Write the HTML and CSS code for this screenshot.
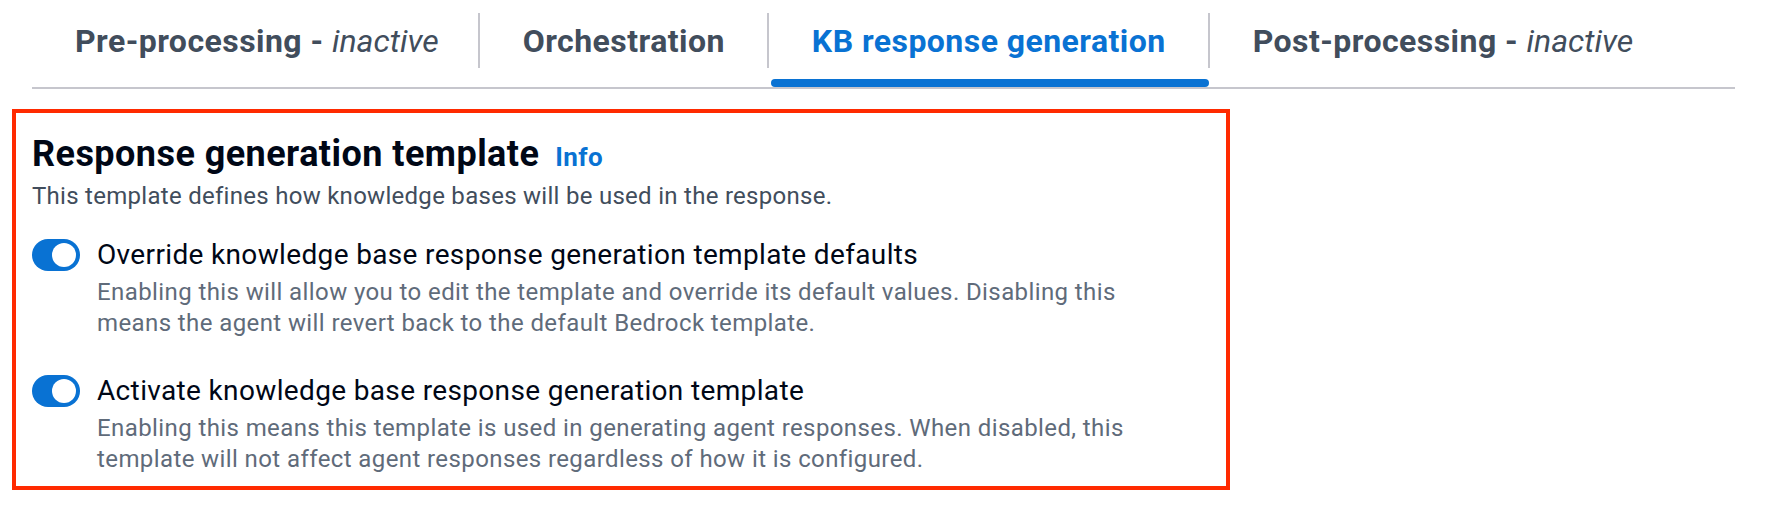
FILE: index.html
```html
<!DOCTYPE html>
<html lang="en">
<head>
<meta charset="utf-8">
<title>KB response generation</title>
<link rel="stylesheet" href="styles.css">
</head>
<body>
  <div class="tabs" role="tablist">
    <div class="tab"><span class="tab-label">Pre-processing - <em>inactive</em></span></div>
    <div class="tab"><span class="tab-label">Orchestration</span></div>
    <div class="tab tab-active"><span class="tab-label">KB response generation</span></div>
    <div class="tab tab-last"><span class="tab-label">Post-processing - <em>inactive</em></span></div>
  </div>

  <section class="panel">
    <div class="panel-header">
      <h2 class="panel-title">Response generation template</h2>
      <a class="info-link" href="#">Info</a>
    </div>
    <p class="panel-desc">This template defines how knowledge bases will be used in the response.</p>

    <div class="toggle-field">
      <div class="toggle-row">
        <span class="toggle"><span class="toggle-knob"></span></span>
        <span class="toggle-label">Override knowledge base response generation template defaults</span>
      </div>
      <p class="toggle-desc">Enabling this will allow you to edit the template and override its default values. Disabling this means the agent will revert back to the default Bedrock template.</p>
    </div>

    <div class="toggle-field toggle-field-second">
      <div class="toggle-row">
        <span class="toggle"><span class="toggle-knob"></span></span>
        <span class="toggle-label">Activate knowledge base response generation template</span>
      </div>
      <p class="toggle-desc">Enabling this means this template is used in generating agent responses. When disabled, this template will not affect agent responses regardless of how it is configured.</p>
    </div>
  </section>
</body>
</html>
```

FILE: styles.css
```css
* { box-sizing: border-box; }

body {
  margin: 0;
  background: #ffffff;
  font-family: Roboto, "Liberation Sans", Arial, sans-serif;
  color: #000716;
}

.tabs {
  display: flex;
  margin: 0 35px 0 32px;
  border-bottom: 2px solid #c6c6cd;
}

.tab {
  position: relative;
  display: flex;
  padding: 13px 0 19px;
}

.tab-label {
  display: block;
  height: 55px;
  line-height: 57px;
  padding: 0 42px 0 43px;
  border-right: 2px solid #c6c6cd;
  font-size: 32px;
  font-weight: 700;
  letter-spacing: 0.45px;
  color: #414d5c;
  white-space: nowrap;
}

.tab:first-child .tab-label { padding-right: 39px; }

.tab-label em {
  font-weight: 400;
  font-style: italic;
  letter-spacing: 0;
}

.tab-last .tab-label { border-right: none; }

.tab-active .tab-label { color: #0972d3; }

.tab-active::after {
  content: "";
  position: absolute;
  left: 2px;
  right: 1px;
  bottom: 0;
  height: 8px;
  border-radius: 4px;
  background: #0972d3;
}

.panel {
  width: 1218px;
  margin: 20px 0 0 12px;
  border: 4px solid #ff2a00;
  padding: 19px 16px 11px;
}

.panel-header {
  display: flex;
  align-items: baseline;
}

.panel-title {
  margin: 0;
  font-size: 36px;
  line-height: 44px;
  font-weight: 700;
  letter-spacing: 0.45px;
  color: #000716;
}

.info-link {
  margin-left: 16px;
  font-size: 26px;
  font-weight: 700;
  letter-spacing: 0.4px;
  color: #0972d3;
  text-decoration: none;
}

.panel-desc {
  margin: 4px 0 0;
  font-size: 24px;
  line-height: 32px;
  letter-spacing: 0.28px;
  color: #414d5c;
}

.toggle-field {
  margin-top: 23px;
}

.toggle-field-second {
  margin-top: 32px;
}

.toggle-row {
  display: flex;
  align-items: center;
  gap: 17px;
  height: 40px;
}

.toggle {
  display: flex;
  align-items: center;
  justify-content: flex-end;
  width: 48px;
  height: 32px;
  padding: 0 4px;
  border-radius: 16px;
  background: #0972d3;
  flex: none;
}

.toggle-knob {
  width: 24px;
  height: 24px;
  border-radius: 50%;
  background: #ffffff;
}

.toggle-label {
  font-size: 28px;
  line-height: 40px;
  letter-spacing: 0.35px;
  color: #000716;
}

.toggle-desc {
  margin: 2px 0 0 65px;
  max-width: 1060px;
  font-size: 24px;
  line-height: 31px;
  letter-spacing: 0.4px;
  color: #5f6b7a;
}
```
